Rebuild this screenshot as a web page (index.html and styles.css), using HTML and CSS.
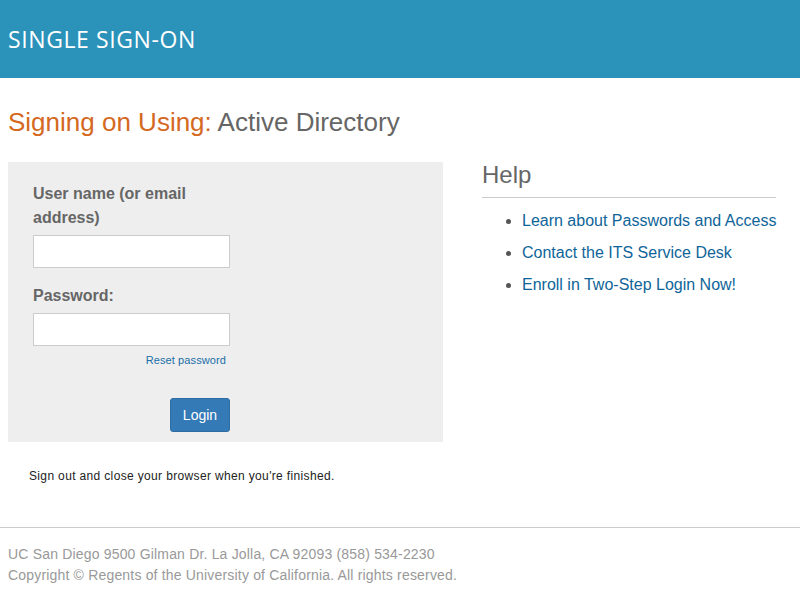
FILE: index.html
```html
<!DOCTYPE html>
<html lang="en">
<head>
<meta charset="utf-8">
<title>Single Sign-On</title>
<link rel="stylesheet" href="styles.css">
</head>
<body>
<header class="banner">
  <div class="brand">SINGLE SIGN-ON</div>
</header>
<main class="content">
  <h1 class="title"><span class="title-lead">Signing on Using:</span> Active Directory</h1>
  <div class="columns">
    <section class="left">
      <form class="login-box">
        <label class="field-label" for="user">User name (or email address)</label>
        <input class="field-input" id="user" type="text">
        <label class="field-label pw-label" for="pw">Password:</label>
        <input class="field-input" id="pw" type="password">
        <div class="reset-row"><a class="reset-link" href="#">Reset password</a></div>
        <div class="btn-row"><button class="login-btn" type="button">Login</button></div>
      </form>
      <p class="signout">Sign out and close your browser when you're finished.</p>
    </section>
    <aside class="help">
      <h2 class="help-title">Help</h2>
      <ul class="help-list">
        <li><a href="#">Learn about Passwords and Access</a></li>
        <li><a href="#">Contact the ITS Service Desk</a></li>
        <li><a href="#">Enroll in Two-Step Login Now!</a></li>
      </ul>
    </aside>
  </div>
</main>
<footer class="footer">
  <p>UC San Diego 9500 Gilman Dr. La Jolla, CA 92093 (858) 534-2230</p>
  <p>Copyright © Regents of the University of California. All rights reserved.</p>
</footer>
</body>
</html>
```

FILE: styles.css
```css
* { box-sizing: border-box; }
html, body { margin: 0; padding: 0; }
body {
  font-family: "Liberation Sans", Arial, sans-serif;
  color: #333;
  background: #fff;
}
.banner {
  background: #2b92ba;
  height: 78px;
  display: flex;
  align-items: center;
  padding: 0 8px;
}
.brand {
  font-family: "Open Sans", sans-serif;
  font-weight: 500;
  color: #fff;
  font-size: 23px;
  letter-spacing: 0.6px;
  line-height: 1;
}
.content { padding: 0 8px; }
.title {
  margin: 29px 0 0;
  font-size: 26px;
  font-weight: normal;
  line-height: 30px;
  color: #666;
}
.title-lead { color: #d4691f; }
.columns {
  display: flex;
  margin-top: 25px;
}
.left { width: 435px; flex-shrink: 0; }
.login-box {
  background: #eee;
  padding: 20px 25px 10px;
  display: flex;
  flex-direction: column;
  align-items: flex-start;
}
.field-label {
  font-weight: bold;
  font-size: 16px;
  line-height: 24px;
  color: #666;
  width: 180px;
  margin-bottom: 5px;
}
.pw-label { margin-top: 16px; margin-bottom: 5px; }
.field-input {
  width: 197px;
  height: 33px;
  border: 1px solid #ccc;
  background: #fff;
  margin: 0;
}
.reset-row {
  width: 193px;
  text-align: right;
  margin-top: 6px;
  line-height: 14px;
}
.reset-link {
  font-size: 11px;
  letter-spacing: 0.1px;
  color: #1a6ea8;
  text-decoration: none;
}
.btn-row {
  width: 197px;
  display: flex;
  justify-content: flex-end;
  margin-top: 31px;
}
.login-btn {
  background: #337ab7;
  border: 1px solid #2e6da4;
  border-radius: 3px;
  color: #fff;
  font-family: "Liberation Sans", Arial, sans-serif;
  font-size: 14px;
  width: 60px;
  height: 34px;
  padding: 0;
}
.signout {
  margin: 26px 0 0 21px;
  font-size: 12px;
  letter-spacing: 0.35px;
  color: #222;
  line-height: 16px;
}
.help {
  margin-left: 39px;
  width: 294px;
}
.help-title {
  margin: 0;
  font-size: 24px;
  font-weight: normal;
  line-height: 26px;
  color: #666;
  padding-bottom: 9px;
  border-bottom: 1px solid #ccc;
}
.help-list {
  margin: 7px 0 0;
  padding-left: 40px;
  color: #555;
}
.help-list li {
  font-size: 16px;
  line-height: 32px;
  white-space: nowrap;
}
.help-list a {
  color: #0f6599;
  text-decoration: none;
}
.footer {
  margin-top: 43px;
  border-top: 1px solid #ccc;
  padding: 16px 8px 0;
}
.footer p {
  margin: 0;
  font-size: 14px;
  letter-spacing: 0.18px;
  line-height: 21px;
  color: #999;
}
```
